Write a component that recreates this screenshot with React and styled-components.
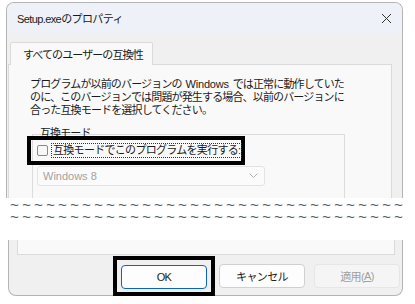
import styled, { createGlobalStyle } from "styled-components";

const Global = createGlobalStyle`
  body {
    margin: 0;
    background: #ffffff;
    font-family: "Liberation Sans", "Noto Sans CJK JP", sans-serif;
    color: #1b1b1b;
  }
`;

const Page = styled.div`
  width: 415px;
  height: 304px;
  padding: 2px 0 0 6px;
  box-sizing: border-box;
  overflow: hidden;
`;

const TopWindow = styled.div`
  width: 397px;
  height: 196px;
  box-sizing: border-box;
  border: 1px solid #b4b4b4;
  border-bottom: none;
  border-radius: 8px 8px 0 0;
  overflow: hidden;
  background: #f0f0f0;
  display: flex;
  flex-direction: column;
`;

const TitleBar = styled.div`
  height: 30px;
  flex: none;
  display: flex;
  align-items: center;
  justify-content: space-between;
  padding: 0 10px 0 10px;
  background: #eef2f8;
  font-size: 11px;
  letter-spacing: -0.6px;
`;

const Close = styled.svg`
  width: 11px;
  height: 11px;
`;

const Body = styled.div`
  flex: 1;
  padding: 9px 10px 0 1px;
  display: flex;
  flex-direction: column;
`;

const Tab = styled.div`
  align-self: flex-start;
  margin-left: 2px;
  height: 23px;
  box-sizing: border-box;
  padding: 0 9px 0 12px;
  display: flex;
  align-items: center;
  background: #f9f9f9;
  border: 1px solid #dadada;
  border-bottom: none;
  border-radius: 2px 2px 0 0;
  font-size: 11px;
  letter-spacing: -0.9px;
  margin-bottom: -1px;
  position: relative;
  z-index: 1;
`;

const Panel = styled.div`
  flex: 1;
  background: #f9f9f9;
  border: 1px solid #dadada;
  border-bottom: none;
  padding: 13px 0 0 21px;
`;

const Intro = styled.p`
  margin: 0;
  font-size: 11px;
  line-height: 13px;
  letter-spacing: -0.85px;
  white-space: nowrap;
`;

const Latin = styled.span`
  letter-spacing: -0.2px;
  margin: 0 1px;
`;

const Group = styled.div`
  margin: 17px 46px 0 2px;
  border: 1px solid #dcdcdc;
  border-bottom: none;
  height: 80px;
  padding: 0 0 0 3px;
`;

const Legend = styled.div`
  margin: -8px 0 0 4px;
  font-size: 11px;
  line-height: 13px;
  letter-spacing: -0.9px;
`;

const Mark = styled.div`
  display: inline-flex;
  align-items: center;
  border: 4px solid #000;
  padding: 4px 0 4px 6px;
  margin: -4px 0 0 -9px;
  gap: 4px;
`;

const Box = styled.span`
  width: 11px;
  height: 11px;
  box-sizing: border-box;
  border: 1px solid #8a8a8a;
  border-radius: 2px;
  background: #f7f7f7;
`;

const CheckLabel = styled.span`
  font-size: 11px;
  line-height: 13px;
  letter-spacing: -0.7px;
  outline: 1px dotted #333;
  outline-offset: 0;
  padding: 0 1px;
`;

const Select = styled.div`
  margin: 1px 0 0 1px;
  width: 228px;
  height: 20px;
  box-sizing: border-box;
  border: 1px solid #e3e3e3;
  border-radius: 3px;
  background: #fbfbfb;
  display: flex;
  align-items: center;
  justify-content: space-between;
  padding: 0 6px 0 5px;
  color: #a2a2a2;
  font-size: 11px;
`;

const Tear = styled.div`
  padding: 3px 0 0 4px;
  height: 39px;
  font-family: "Liberation Mono", monospace;
  font-size: 15px;
  line-height: 12px;
  letter-spacing: 3px;
  color: #555;
  white-space: nowrap;
  overflow: hidden;
`;

const BottomWindow = styled.div`
  margin-left: 2px;
  width: 395px;
  height: 56px;
  box-sizing: border-box;
  border: 1px solid #b4b4b4;
  border-top: none;
  border-radius: 0 0 8px 8px;
  background: #f0f0f0;
`;

const Strip = styled.div`
  margin: 0 7px 0 8px;
  height: 15px;
  box-sizing: border-box;
  background: #f9f9f9;
  border: 1px solid #dadada;
  border-top: none;
`;

const Buttons = styled.div`
  display: flex;
  align-items: center;
  padding: 1px 0 0 104px;
`;

const Frame = styled.div`
  border: 4px solid #000;
  padding: 5px 4px 3px 4px;
`;

const Button = styled.div`
  width: 86px;
  height: 24px;
  box-sizing: border-box;
  border-radius: 4px;
  display: flex;
  align-items: center;
  justify-content: center;
  font-size: 11px;
  letter-spacing: -0.6px;
  margin-left: ${(p) => p.$gap || 0}px;
  border: 1px solid ${(p) => (p.$primary ? "#0a66c2" : p.$disabled ? "#e6e6e6" : "#d0d0d0")};
  background: ${(p) => (p.$disabled ? "#f5f5f5" : "#fdfdfd")};
  color: ${(p) => (p.$disabled ? "#a0a0a0" : "#1b1b1b")};
  u {
    text-decoration-thickness: 1px;
  }
`;

export default function App() {
  const tildes = "~".repeat(33);
  return (
    <Page>
      <Global />
      <TopWindow>
        <TitleBar>
          <span>Setup.exeのプロパティ</span>
          <Close viewBox="0 0 11 11">
            <path d="M1 1 L10 10 M10 1 L1 10" stroke="#333" strokeWidth="1" />
          </Close>
        </TitleBar>
        <Body>
          <Tab>すべてのユーザーの互換性</Tab>
          <Panel>
            <Intro>
              プログラムが以前のバージョンの<Latin> Windows </Latin>では正常に動作していた
              <br />
              のに、このバージョンでは問題が発生する場合、以前のバージョンに
              <br />
              合った互換モードを選択してください。
            </Intro>
            <Group>
              <Legend>互換モード</Legend>
              <Mark>
                <Box />
                <CheckLabel>互換モードでこのプログラムを実行する:</CheckLabel>
              </Mark>
              <Select>
                <span>Windows 8</span>
                <svg width="9" height="6" viewBox="0 0 9 6">
                  <path d="M0.5 0.5 L4.5 4.5 L8.5 0.5" fill="none" stroke="#b0b0b0" strokeWidth="1" />
                </svg>
              </Select>
            </Group>
          </Panel>
        </Body>
      </TopWindow>
      <Tear>
        {tildes}
        <br />
        {tildes}
      </Tear>
      <BottomWindow>
        <Strip />
        <Buttons>
          <Frame>
            <Button $primary>OK</Button>
          </Frame>
          <Button $gap={4}>キャンセル</Button>
          <Button $gap={9} $disabled>
            適用(<u>A</u>)
          </Button>
        </Buttons>
      </BottomWindow>
    </Page>
  );
}
